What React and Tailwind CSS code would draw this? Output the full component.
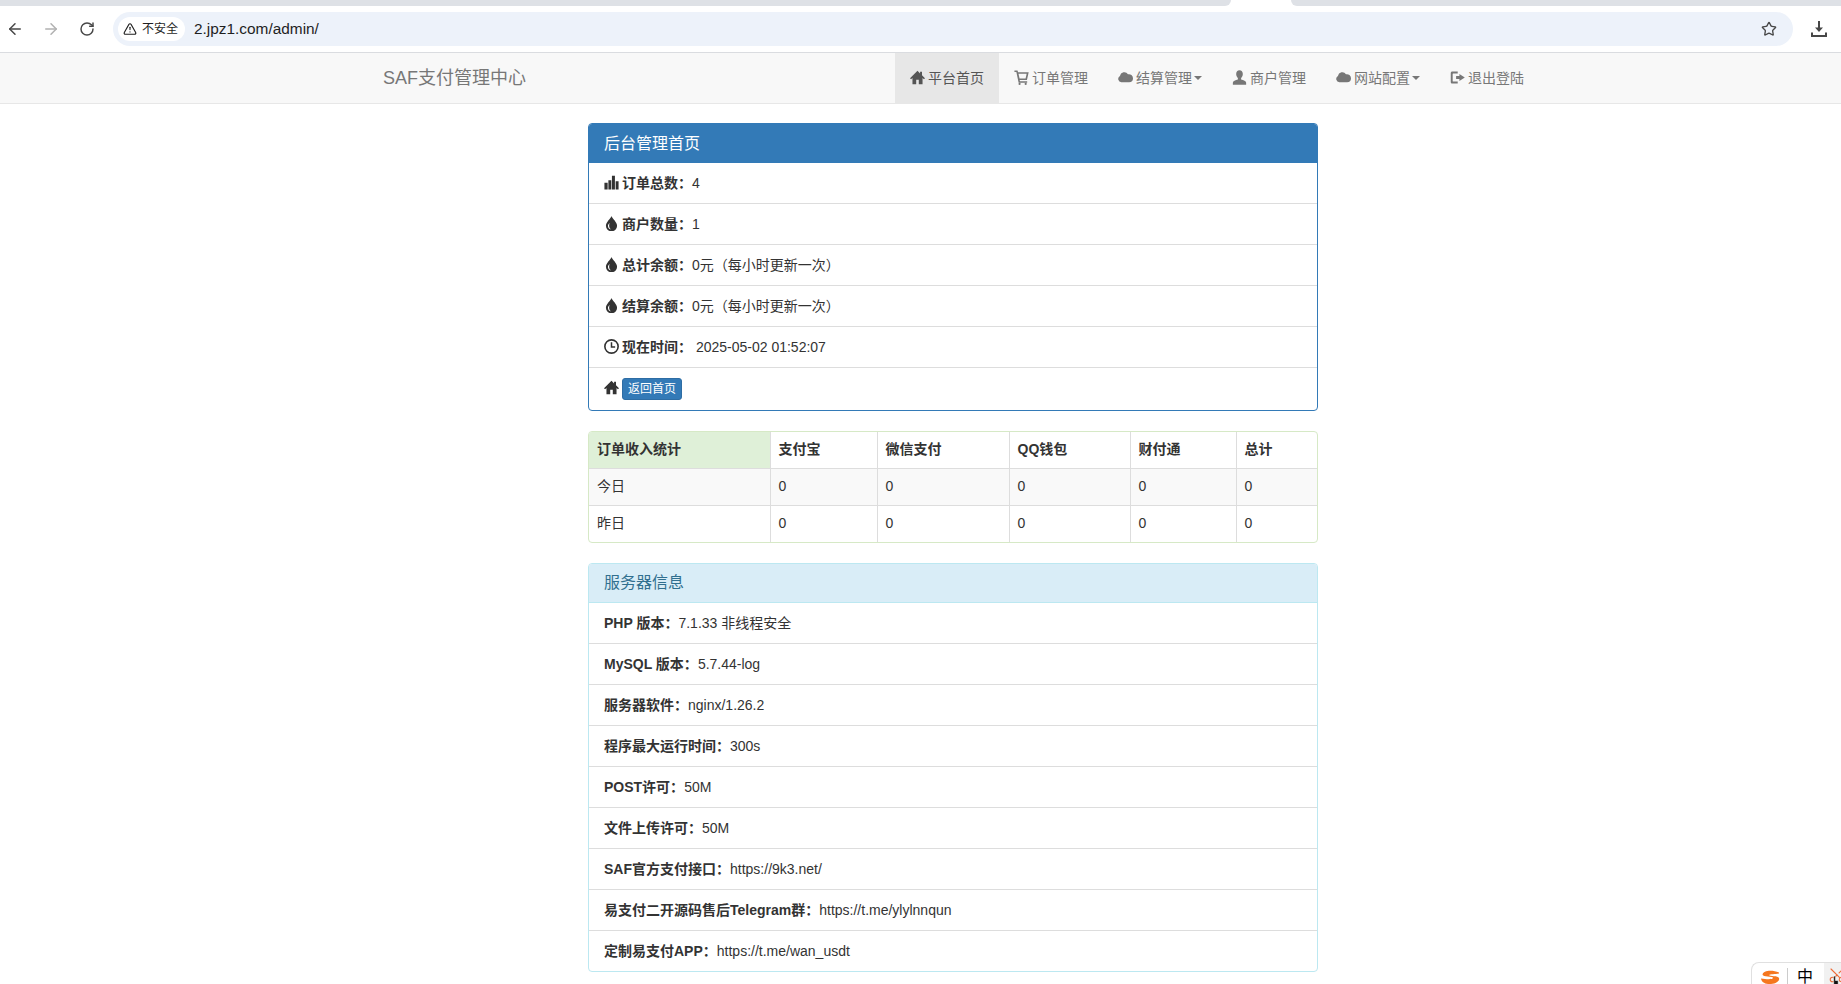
import { ArrowLeft, ArrowRight, RotateCw, Star, TriangleAlert, Scissors } from 'lucide-react';

const FONT = { fontFamily: '"Liberation Sans", "Noto Sans CJK SC", sans-serif' };

const Glyph = ({ children, className = '' }) => (
  <svg viewBox="0 0 14 14" className={`w-[15px] h-[15px] shrink-0 fill-current ${className}`}>{children}</svg>
);

const HomeIcon = (p) => <Glyph {...p}><path d="M7 .8 0 7.6l1 1 1.300-1.100V13.400h3.500V9h2.400v4.400h3.500V7.500l1.300 1.100 1-1L11.200 4.900V1.600H9.400v1.600z" /></Glyph>;
const CartIcon = (p) => <Glyph {...p}><path d="M.4 .4h2.900l.5 1.700h9.900l-1.600 7.300H5.300l.3 1h6.700v1.400H4.300L2.200 1.800H.4zM4.200 3.500l1 4.500h5.600l1-4.500z" /><circle cx="5.200" cy="13" r="1" /><circle cx="10.900" cy="13" r="1" /></Glyph>;
const CloudIcon = (p) => <Glyph {...p}><path d="M3.200 11.400A3.100 3.100 0 0 1 1.800 5.600 4.100 4.100 0 0 1 9.300 4a3.800 3.800 0 0 1 4.700 3.700 3.700 3.700 0 0 1-3.700 3.700z" /></Glyph>;
const UserIcon = (p) => <Glyph {...p}><path d="M7 .2c1.900 0 3.100 1.500 3.100 3.500 0 1.500-.7 3-1.600 3.700v1.500c2.200.6 4.700 1.500 4.700 2.900v2H.8v-2c0-1.400 2.500-2.300 4.700-2.900V7.400C4.600 6.700 3.900 5.200 3.900 3.700 3.900 1.700 5.100.2 7 .2z" /></Glyph>;
const LogoutIcon = (p) => <Glyph {...p}><path d="M2.200 1.400h5v1.800H3c-.3 0-.5.200-.5.500v6.600c0 .3.200.5.500.5h4.200v1.800h-5C1.300 12.600.700 12 .700 11.100V2.900C.700 2 1.300 1.400 2.200 1.400z" /><path d="M5.700 5.700h3.100V3.700L13.800 7l-5 3.300V8.300H5.700z" /></Glyph>;
const StatsIcon = (p) => <Glyph {...p}><path d="M.4 7.200h3v6.300h-3zM4.100 4.800h2.700v8.700H4.100zM7.400 .8h2.800v12.700H7.400zM10.900 5.800h2.700v7.700h-2.700z" /></Glyph>;
const TintIcon = (p) => <Glyph {...p}><path d="M7 0C6.400 2.200 1.800 5.600 1.800 9.100a5.200 5.200 0 0 0 10.400 0C12.200 5.600 7.600 2.200 7 0z" /><path d="M3.700 9.300a3.400 3.400 0 0 0 2.700 3.200c-1-.9-1.600-2.100-1.600-3.400 0-1 .2-1.900.5-2.700-.8.900-1.600 1.800-1.600 2.900z" className="fill-white" /></Glyph>;
const TimeIcon = (p) => (
  <Glyph {...p}>
    <circle cx="7" cy="7" r="6.200" fill="none" stroke="currentColor" strokeWidth="1.500" />
    <path d="M7 3v4.400h3.400" fill="none" stroke="currentColor" strokeWidth="1.400" />
  </Glyph>
);

const NAV = [
  { label: '平台首页', icon: HomeIcon, active: true },
  { label: '订单管理', icon: CartIcon },
  { label: '结算管理', icon: CloudIcon, caret: true },
  { label: '商户管理', icon: UserIcon },
  { label: '网站配置', icon: CloudIcon, caret: true },
  { label: '退出登陆', icon: LogoutIcon },
];

const STATS = [
  { icon: StatsIcon, label: '订单总数：', value: '4' },
  { icon: TintIcon, label: '商户数量：', value: '1' },
  { icon: TintIcon, label: '总计余额：', value: '0元（每小时更新一次）' },
  { icon: TintIcon, label: '结算余额：', value: '0元（每小时更新一次）' },
  { icon: TimeIcon, label: '现在时间：', value: '\u00a02025-05-02 01:52:07' },
];

const SERVER = [
  ['PHP 版本：', '7.1.33 非线程安全'],
  ['MySQL 版本：', '5.7.44-log'],
  ['服务器软件：', 'nginx/1.26.2'],
  ['程序最大运行时间：', '300s'],
  ['POST许可：', '50M'],
  ['文件上传许可：', '50M'],
  ['SAF官方支付接口：', 'https://9k3.net/'],
  ['易支付二开源码售后Telegram群：', 'https://t.me/ylylnnqun'],
  ['定制易支付APP：', 'https://t.me/wan_usdt'],
];

const COLS = ['w-[181px]', 'w-[107px]', 'w-[132px]', 'w-[121px]', 'w-[106px]', 'w-[81px]'];
const HEAD = ['订单收入统计', '支付宝', '微信支付', 'QQ钱包', '财付通', '总计'];

function BrowserBar() {
  return (
    <>
      <div className="flex h-[6px] bg-white">
        <div className="w-[1231px] bg-[#dee1e6] rounded-br-lg" />
        <div className="flex-1" />
        <div className="w-[550px] bg-[#dee1e6] rounded-bl-lg" />
      </div>
      <div className="flex items-center h-[47px] bg-white border-b border-[#dadce0] pb-px">
        <div className="flex w-[113px] items-center pl-[6px] gap-[18px]">
          <ArrowLeft size={18} strokeWidth={2} className="text-[#474747]" />
          <ArrowRight size={18} strokeWidth={2} className="text-[#b1b1b1]" />
          <RotateCw size={16} strokeWidth={2.2} className="text-[#474747] ml-px" />
        </div>
        <div className="flex items-center w-[1680px] h-[34px] rounded-full bg-[#edf2fa] pl-[5px] pr-[16px]">
          <div className="flex items-center gap-[5px] h-[24px] w-[67px] pl-[5px] bg-white rounded-full text-[12px] text-[#1f1f1f]">
            <TriangleAlert size={14} strokeWidth={2} />
            <span>不安全</span>
          </div>
          <span className="ml-[9px] text-[15.4px] text-[#1f1f1f]">2.jpz1.com/admin/</span>
          <Star size={16} strokeWidth={2} className="ml-auto text-[#474747]" />
        </div>
        <svg viewBox="0 0 16 16" className="w-4 h-4 ml-[18px] text-[#474747]">
          <path d="M7 0h2v6.500h3L8 11 4 6.500h3z" fill="currentColor" />
          <path d="M1 11.500V15h14v-3.500" fill="none" stroke="currentColor" strokeWidth="2" />
        </svg>
      </div>
    </>
  );
}

function Navbar() {
  return (
    <nav className="flex h-[51px] bg-[#f8f8f8] border-b border-[#e7e7e7] mb-[19px]">
      <div className="w-[895px] pl-[383px] flex items-center text-[18px] text-[#777]">SAF支付管理中心</div>
      <div className="flex">
        {NAV.map((n) => (
          <a key={n.label} className={`flex items-center h-[50px] px-[15px] text-[14px] ${n.active ? 'bg-[#e7e7e7] text-[#555]' : 'text-[#777]'}`}>
            <n.icon className="mr-[3px] -mt-[2px]" />
            <span>{n.label}</span>
            {n.caret && <span className="ml-[2px] w-0 h-0 border-x-[4px] border-t-[4px] border-x-transparent border-t-current" />}
          </a>
        ))}
      </div>
    </nav>
  );
}

function Row({ children, last }) {
  return <li className={`flex items-center px-[15px] ${last ? 'h-[40px]' : 'h-[41px] border-b border-[#ddd]'}`}>{children}</li>;
}

export default function App() {
  return (
    <div style={FONT} className="relative h-screen overflow-hidden bg-white text-[14px] text-[#333]">
      <BrowserBar />
      <Navbar />

      <main className="ml-[588px] w-[730px]">
        <section className="border border-[#337ab7] rounded overflow-hidden mb-5">
          <h3 className="flex items-center h-[39px] px-[15px] bg-[#337ab7] text-white text-[16px]">后台管理首页</h3>
          <ul>
            {STATS.map((s) => (
              <Row key={s.label}>
                <s.icon className="mr-[3px] -mt-[2px]" />
                <b>{s.label}</b>
                <span>{s.value}</span>
              </Row>
            ))}
            <li className="flex items-center h-[42px] px-[15px]">
              <HomeIcon className="mr-[3px] -mt-[4px]" />
              <a className="flex items-center justify-center w-[60px] h-[22px] rounded-[3px] bg-[#337ab7] border border-[#2e6da4] text-white text-[12px]">返回首页</a>
            </li>
          </ul>
        </section>

        <div className="border border-[#d6e9c6] rounded overflow-hidden mb-5">
          <table className="w-full table-fixed border-collapse">
            <thead>
              <tr className="h-[36px] border-b border-[#ddd]">
                {HEAD.map((h, i) => (
                  <th key={h} className={`${COLS[i]} px-2 text-left font-bold ${i ? 'border-l border-[#ddd]' : 'bg-[#dff0d8]'}`}>{h}</th>
                ))}
              </tr>
            </thead>
            <tbody>
              {['今日', '昨日'].map((day, r) => (
                <tr key={day} className={r ? 'h-[37px]' : 'h-[37px] bg-[#f9f9f9] border-b border-[#ddd]'}>
                  <td className="px-2">{day}</td>
                  {[0, 1, 2, 3, 4].map((c) => <td key={c} className="px-2 border-l border-[#ddd]">0</td>)}
                </tr>
              ))}
            </tbody>
          </table>
        </div>

        <section className="border border-[#bce8f1] rounded overflow-hidden">
          <h3 className="flex items-center h-[39px] px-[15px] bg-[#d9edf7] border-b border-[#bce8f1] text-[#31708f] text-[16px]">服务器信息</h3>
          <ul>
            {SERVER.map(([k, v], i) => (
              <Row key={k} last={i === SERVER.length - 1}>
                <b>{k}</b>
                <span>{v}</span>
              </Row>
            ))}
          </ul>
        </section>
      </main>

      <div className="absolute right-0 bottom-0 flex w-[90px] h-[22px] bg-white border-l border-t border-[#e0e0e0] rounded-tl-lg overflow-hidden">
        <svg viewBox="0 0 20 16" className="w-[20px] h-[16px] ml-[8px] mt-[7px] shrink-0">
          <path d="M19 2.500C12 -.5 3 .5 2.500 4.500c-.3 3 11 1.500 10.500 3.500-.3 1.500-6 1.500-12 .5.500 3.500 4 6 10 5.500 5-.5 9-3 8-6-1-2.500-9-1.500-10-3 1-.8 6-.8 10-1.500z" fill="#f5771f" />
        </svg>
        <div className="w-px h-[16px] bg-[#ccc] ml-[7px] mt-[5px] shrink-0" />
        <span className="ml-[9px] mt-[6px] text-[16px] leading-none text-black shrink-0">中</span>
        <div className="relative flex-1 ml-[11px] h-full bg-[#f1f1f1]">
          <Scissors size={18} strokeWidth={1.500} className="ml-[4px] mt-[3px] -rotate-90 text-[#ee6c3a]" />
          <svg viewBox="0 0 10 12" className="absolute left-[7px] top-[12px] w-[9px] h-[11px]">
            <path d="M3 11V2a1 1 0 0 1 2 0v4h3v5z" fill="#111" stroke="#fff" strokeWidth="0.600" />
          </svg>
        </div>
      </div>
    </div>
  );
}
